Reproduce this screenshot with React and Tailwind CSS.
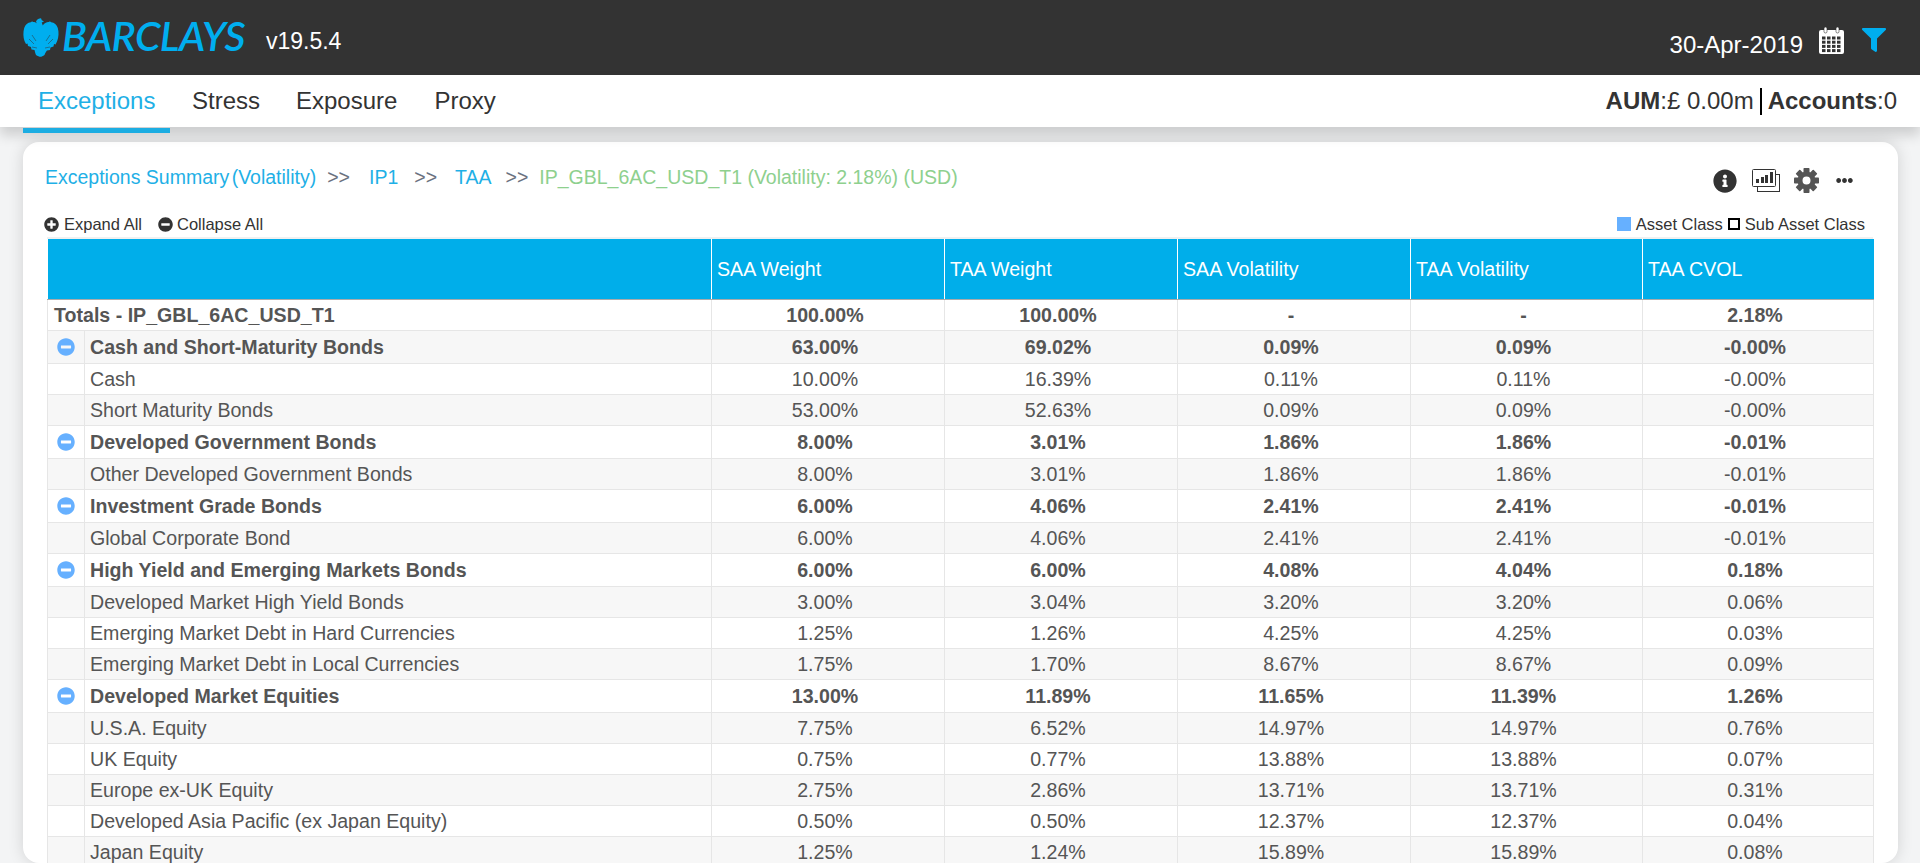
import { FaFilter, FaInfoCircle, FaEllipsisH, FaPlusCircle, FaMinusCircle } from "react-icons/fa";

const COLUMNS = ["SAA Weight", "TAA Weight", "SAA Volatility", "TAA Volatility", "TAA CVOL"];

const ROWS = [
  ["Cash and Short-Maturity Bonds", "63.00%", "69.02%", "0.09%", "0.09%", "-0.00%", true],
  ["Cash", "10.00%", "16.39%", "0.11%", "0.11%", "-0.00%"],
  ["Short Maturity Bonds", "53.00%", "52.63%", "0.09%", "0.09%", "-0.00%"],
  ["Developed Government Bonds", "8.00%", "3.01%", "1.86%", "1.86%", "-0.01%", true],
  ["Other Developed Government Bonds", "8.00%", "3.01%", "1.86%", "1.86%", "-0.01%"],
  ["Investment Grade Bonds", "6.00%", "4.06%", "2.41%", "2.41%", "-0.01%", true],
  ["Global Corporate Bond", "6.00%", "4.06%", "2.41%", "2.41%", "-0.01%"],
  ["High Yield and Emerging Markets Bonds", "6.00%", "6.00%", "4.08%", "4.04%", "0.18%", true],
  ["Developed Market High Yield Bonds", "3.00%", "3.04%", "3.20%", "3.20%", "0.06%"],
  ["Emerging Market Debt in Hard Currencies", "1.25%", "1.26%", "4.25%", "4.25%", "0.03%"],
  ["Emerging Market Debt in Local Currencies", "1.75%", "1.70%", "8.67%", "8.67%", "0.09%"],
  ["Developed Market Equities", "13.00%", "11.89%", "11.65%", "11.39%", "1.26%", true],
  ["U.S.A. Equity", "7.75%", "6.52%", "14.97%", "14.97%", "0.76%"],
  ["UK Equity", "0.75%", "0.77%", "13.88%", "13.88%", "0.07%"],
  ["Europe ex-UK Equity", "2.75%", "2.86%", "13.71%", "13.71%", "0.31%"],
  ["Developed Asia Pacific (ex Japan Equity)", "0.50%", "0.50%", "12.37%", "12.37%", "0.04%"],
  ["Japan Equity", "1.25%", "1.24%", "15.89%", "15.89%", "0.08%"],
];

function Eagle() {
  return (
    <svg width="36" height="39" viewBox="0 0 36 39" className="shrink-0">
      <path
        fill="#00aeef"
        d="M13 3.5C14 1.5 16 .3 18 .3l.8 1.9 2.2 1.3-2.3 1.1 1.1 2.9C21 5 24 3.8 26 4c.8-.8 1.6-.3 2.2.3 3 .3 5.6 2.6 6.6 5.7 1.2 4 1 9.600-.8 13.500l-1.500 3-1.500-.5-.5 2.500-3 1-.5 2.500-3 .5C22.500 34 22 36 21.500 37c-1.500 1.200-3 1.800-4 1.800s-3-.7-4.500-1.800c-.5-1-1-3-1.500-5l-3-.5-.5-2.500-3-1-.5-2.500-1.500.5-1.500-3C.200 19.600 0 14 1.200 10 2.200 6.900 4.800 4.600 7.800 4.300 8.400 3.700 9.200 3.200 10 4c2 0 3.300.5 4 1.500z"
      />
      <path stroke="#333" strokeWidth="0.5" fill="none" d="M6 21l5 5M9 17l4 6M30 21l-5 5M27 17l-4 6M9 29l5 1M27 29l-5 1" />
    </svg>
  );
}

function CalendarIcon() {
  const cells = [];
  for (let y = 0; y < 4; y++) {
    for (let x = 0; x < 4; x++) {
      cells.push(<rect key={`${x}-${y}`} x={3 + x * 5} y={9.500 + y * 4.200} width="3.500" height="3" fill="#333" />);
    }
  }
  return (
    <svg width="25" height="27" viewBox="0 0 25 27" className="block shrink-0">
      <rect x="0" y="3" width="25" height="24" rx="2" fill="#fff" />
      {cells}
      <rect x="5" y="0" width="3" height="6" rx="1.500" fill="#fff" stroke="#333" strokeWidth="0.6" />
      <rect x="17" y="0" width="3" height="6" rx="1.500" fill="#fff" stroke="#333" strokeWidth="0.6" />
    </svg>
  );
}

function ReportIcon() {
  return (
    <svg width="28" height="24" viewBox="0 0 28 24" className="block shrink-0">
      <rect x="5.5" y="5.5" width="22" height="17" fill="#fff" stroke="#333" />
      <rect x="0.5" y="0.5" width="23" height="17" rx="1" fill="#fff" stroke="#333" />
      <rect x="4" y="10" width="3" height="4" fill="#333" />
      <rect x="9" y="8" width="3" height="6" fill="#333" />
      <rect x="13" y="6" width="3" height="8" fill="#333" />
      <rect x="18" y="3" width="3" height="11" fill="#333" />
    </svg>
  );
}

function GearIcon() {
  const teeth = [0, 45, 90, 135, 180, 225, 270, 315];
  return (
    <svg width="25" height="25" viewBox="0 0 25 25" className="block shrink-0">
      {teeth.map((deg) => (
        <rect key={deg} x="9.5" y="0" width="6" height="6" rx="0.8" fill="#555" transform={`rotate(${deg} 12.5 12.5)`} />
      ))}
      <circle cx="12.5" cy="12.5" r="6.500" fill="none" stroke="#555" strokeWidth="5" />
    </svg>
  );
}

function DataRow({ row }) {
  const bold = row[6];
  return (
    <tr className={`even:bg-[#f7f7f7] ${bold ? "h-[33px] font-bold" : "h-[31px]"}`}>
      <td className="border border-[#e6e6e6] pt-[1px] pb-0 px-0">
        {bold && (
          <div className="flex justify-center">
            <FaMinusCircle className="text-[#66b0ff] text-[18px]" />
          </div>
        )}
      </td>
      <td className="border border-[#e6e6e6] pl-[5px] pt-[1px] pb-0 pr-0">{row[0]}</td>
      {row.slice(1, 6).map((value, i) => (
        <td key={i} className="border border-[#e6e6e6] pt-[1px] pb-0 pl-0 pr-[6px] text-center">
          {value}
        </td>
      ))}
    </tr>
  );
}

export default function App() {
  return (
    <div className="h-screen overflow-hidden flex flex-col bg-[#f3f4f5] font-['Liberation_Sans',Arial,sans-serif]">
      <header className="h-[75px] shrink-0 bg-[#333333] flex items-center justify-between pl-[23px] pr-[34px]">
        <div className="flex items-center">
          <Eagle />
          <span className="ml-[3px] mb-[4px] font-['Lato',sans-serif] italic font-semibold text-[41px] leading-none text-[#00aeef] tracking-[-0.6px]">
            BARCLAYS
          </span>
          <span className="ml-[21px] mt-[8px] text-[23px] text-white">v19.5.4</span>
        </div>
        <div className="flex items-center">
          <span className="text-[24px] text-white mt-[14px]">30-Apr-2019</span>
          <span className="ml-[16px] mt-[5px]"><CalendarIcon /></span>
          <FaFilter className="ml-[18px] text-[#00aeef] text-[24px] mt-[4px]" />
        </div>
      </header>

      <nav className="h-[52px] shrink-0 bg-white flex items-center justify-between pl-[23px] pr-[23px] shadow-[0_8px_12px_rgba(0,0,0,0.16)] relative z-10 text-[#333]">
        <div className="flex items-center text-[24px]">
          <a className="relative w-[147px] pl-[15px] text-[#1fb0e6]">
            Exceptions
            <span className="absolute left-0 right-0 top-[45px] h-[5px] bg-[#1cade2]" />
          </a>
          <a className="ml-[22px]">Stress</a>
          <a className="ml-[36px]">Exposure</a>
          <a className="ml-[37px]">Proxy</a>
        </div>
        <div className="flex items-center text-[24px]">
          <b>AUM</b>:£ 0.00m
          <span className="mx-[6px] w-[2px] h-[27px] bg-black" />
          <b>Accounts</b>:0
        </div>
      </nav>

      <div className="flex-1 min-h-0 pl-[23px] pr-[22px] pt-[15px]">
        <main className="h-full bg-white rounded-[16px] shadow-[0_0_16px_rgba(0,0,0,0.14)] overflow-hidden pl-[24px] pr-[25px]">
          <div className="flex items-center justify-between -ml-[2px] pt-[10px] h-[61px]">
            <div className="text-[19.5px] text-[#6b7280] whitespace-nowrap">
              <span className="text-[#1fb0e6]">
                Exceptions Summary <span className="-ml-[3px]">(Volatility)</span>
              </span>
              <span className="ml-[11px]">&gt;&gt;</span>
              <span className="ml-[19px] text-[#1fb0e6]">IP1</span>
              <span className="ml-[16px]">&gt;&gt;</span>
              <span className="ml-[18px] text-[#1fb0e6]">TAA</span>
              <span className="ml-[14px]">&gt;&gt;</span>
              <span className="ml-[11px] text-[#8ed08e]">IP_GBL_6AC_USD_T1 (Volatility: 2.18%) (USD)</span>
            </div>
            <div className="flex items-center pr-[20px] mt-[6px]">
              <FaInfoCircle className="text-[#333] text-[24px]" />
              <span className="ml-[15px]"><ReportIcon /></span>
              <span className="ml-[14px]"><GearIcon /></span>
              <FaEllipsisH className="ml-[17px] text-[#333] text-[17px]" />
            </div>
          </div>

          <div className="flex items-center justify-between h-[36px] pt-[8px] pr-[8px] border-b-2 border-[#f0f0f0] text-[16.5px] text-[#333]">
            <div className="flex items-center -ml-[3px]">
              <FaPlusCircle className="text-[15px] mr-[5px]" />
              Expand All
              <FaMinusCircle className="ml-[16px] text-[15px] mr-[4px]" />
              Collapse All
            </div>
            <div className="flex items-center">
              <span className="w-[14px] h-[14px] bg-[#66b0ff] mr-[5px]" />
              Asset Class
              <span className="ml-[5px] mr-[5px] w-[12px] h-[12px] border-2 border-black" />
              Sub Asset Class
            </div>
          </div>

          <table className="w-[1826px] table-fixed border-collapse text-[19.6px] leading-[27px] text-[#555]">
            <colgroup>
              <col className="w-[37px]" />
              <col className="w-[627px]" />
              <col className="w-[233px]" />
              <col className="w-[233px]" />
              <col className="w-[233px]" />
              <col className="w-[232px]" />
              <col className="w-[231px]" />
            </colgroup>
            <thead>
              <tr className="h-[60px] bg-[#00aeea] text-white">
                <th colSpan={2} className="p-0 border-r border-b border-r-white border-b-[#aaaaaa]" />
                {COLUMNS.map((name) => (
                  <th key={name} className="border-r border-b border-r-white border-b-[#aaaaaa] last:border-r-0 pl-[5px] pt-[1px] text-left font-normal">
                    {name}
                  </th>
                ))}
              </tr>
            </thead>
            <tbody>
              <tr className="h-[31px] font-bold">
                <td colSpan={2} className="border border-[#e6e6e6] pl-[6px] pt-[1px] pb-0">
                  Totals - IP_GBL_6AC_USD_T1
                </td>
                {["100.00%", "100.00%", "-", "-", "2.18%"].map((value, i) => (
                  <td key={i} className="border border-[#e6e6e6] pt-[1px] pb-0 pl-0 pr-[6px] text-center">
                    {value}
                  </td>
                ))}
              </tr>
              {ROWS.map((row) => (
                <DataRow key={row[0]} row={row} />
              ))}
            </tbody>
          </table>
        </main>
      </div>
    </div>
  );
}
